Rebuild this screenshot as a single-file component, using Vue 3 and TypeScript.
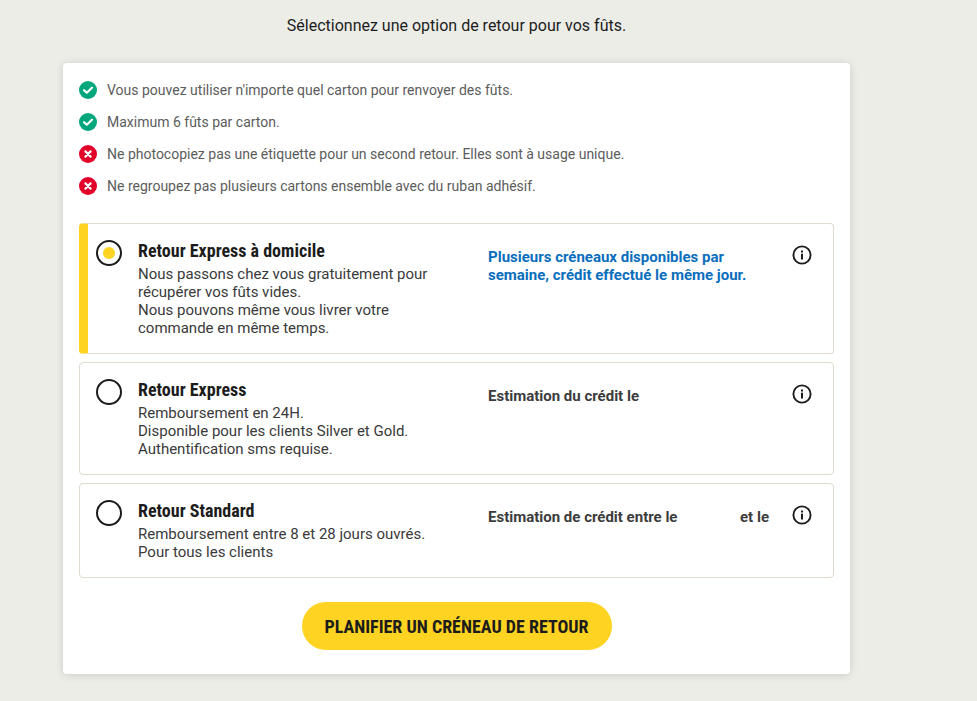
<script setup lang="ts">
interface Rule { ok: boolean; text: string }
interface Option { title: string; lines: string[]; selected: boolean; info: string; extra?: string }

const rules: Rule[] = [
  { ok: true, text: "Vous pouvez utiliser n'importe quel carton pour renvoyer des fûts." },
  { ok: true, text: 'Maximum 6 fûts par carton.' },
  { ok: false, text: 'Ne photocopiez pas une étiquette pour un second retour. Elles sont à usage unique.' },
  { ok: false, text: 'Ne regroupez pas plusieurs cartons ensemble avec du ruban adhésif.' },
]

const options: Option[] = [
  {
    title: 'Retour Express à domicile',
    lines: ['Nous passons chez vous gratuitement pour récupérer vos fûts vides.', 'Nous pouvons même vous livrer votre commande en même temps.'],
    selected: true,
    info: 'Plusieurs créneaux disponibles par semaine, crédit effectué le même jour.',
  },
  {
    title: 'Retour Express',
    lines: ['Remboursement en 24H.', 'Disponible pour les clients Silver et Gold.', 'Authentification sms requise.'],
    selected: false,
    info: 'Estimation du crédit le',
  },
  {
    title: 'Retour Standard',
    lines: ['Remboursement entre 8 et 28 jours ouvrés.', 'Pour tous les clients'],
    selected: false,
    info: 'Estimation de crédit entre le',
    extra: 'et le',
  },
]
</script>

<template>
  <main class="page">
    <h1 class="heading">Sélectionnez une option de retour pour vos fûts.</h1>
    <section class="card">
      <ul class="rules">
        <li v-for="r in rules" :key="r.text" class="rule">
          <svg class="rule-icon" viewBox="0 0 18 18" aria-hidden="true">
            <circle cx="9" cy="9" r="9" :fill="r.ok ? '#00a77d' : '#e2002b'" />
            <path v-if="r.ok" d="M5 9.2 L7.8 11.8 L13 6.7" fill="none" stroke="#fff" stroke-width="2.2" stroke-linecap="round" stroke-linejoin="round" />
            <path v-else d="M6.4 6.4 L11.6 11.6 M11.6 6.4 L6.4 11.6" fill="none" stroke="#fff" stroke-width="2.2" stroke-linecap="round" />
          </svg>
          <span>{{ r.text }}</span>
        </li>
      </ul>

      <div class="options">
        <article v-for="o in options" :key="o.title" class="option" :class="{ selected: o.selected }">
          <span class="radio"><span v-if="o.selected" class="dot"></span></span>
          <div class="desc">
            <h2 class="title">{{ o.title }}</h2>
            <p v-for="l in o.lines" :key="l" class="line">{{ l }}</p>
          </div>
          <div class="info" :class="{ blue: o.selected }">
            <span>{{ o.info }}</span>
            <span v-if="o.extra" class="extra">{{ o.extra }}</span>
          </div>
          <svg class="info-icon" viewBox="0 0 20 20" aria-hidden="true">
            <circle cx="10" cy="10" r="8.6" fill="none" stroke="#1c1c1c" stroke-width="1.9" />
            <rect x="9" y="8.7" width="2" height="5.8" fill="#1c1c1c" />
            <rect x="9" y="5.5" width="2" height="2" fill="#1c1c1c" />
          </svg>
        </article>
      </div>

      <div class="actions">
        <button class="cta" type="button">PLANIFIER UN CRÉNEAU DE RETOUR</button>
      </div>
    </section>
  </main>
</template>

<style scoped>
.page {
  width: 977px;
  height: 701px;
  background: #edede8;
  font-family: Roboto, "Liberation Sans", sans-serif;
  overflow: hidden;
  box-sizing: border-box;
}
.heading {
  margin: 0;
  height: 63px;
  padding: 16px 64px 0 0;
  box-sizing: border-box;
  text-align: center;
  font-size: 16px;
  font-weight: 400;
  line-height: 19px;
  color: #1c1c1c;
}
.card {
  width: 787px;
  height: 611px;
  margin-left: 63px;
  background: #fff;
  border-radius: 4px;
  box-shadow: 0 1px 8px rgba(0, 0, 0, 0.14);
  padding: 11px 16px 0;
  box-sizing: border-box;
}
.rules {
  list-style: none;
  margin: 0;
  padding: 0;
}
.rule {
  display: flex;
  align-items: center;
  gap: 10px;
  height: 32px;
  font-size: 14px;
  color: #5c5c5c;
}
.rule-icon {
  width: 18px;
  height: 18px;
  flex: none;
}
.options {
  margin-top: 21px;
  display: flex;
  flex-direction: column;
  gap: 8px;
}
.option {
  display: flex;
  align-items: flex-start;
  border: 1px solid #e0dbce;
  border-radius: 4px;
  padding: 16px 20px 16px 16px;
  overflow: hidden;
}
.option.selected {
  border-left: 9px solid #ffd321;
  padding-left: 8px;
}
.radio {
  flex: none;
  width: 26px;
  height: 26px;
  border: 2px solid #1c1c1c;
  border-radius: 50%;
  box-sizing: border-box;
  display: flex;
  align-items: center;
  justify-content: center;
}
.dot {
  width: 12px;
  height: 12px;
  border-radius: 50%;
  background: #ffd321;
}
.desc {
  width: 350px;
  margin-left: 16px;
  flex: none;
}
.title {
  margin: 0 0 3px;
  font-size: 18px;
  line-height: 22px;
  font-weight: 700;
  font-stretch: 75%;
  color: #1c1c1c;
}
.line {
  margin: 0;
  font-size: 15px;
  line-height: 18px;
  color: #3a3a3a;
  width: 305px;
}
.info {
  width: 304px;
  flex: none;
  display: flex;
  justify-content: space-between;
  font-size: 15px;
  font-weight: 700;
  line-height: 18px;
  color: #3c3c3c;
  padding: 8px 23px 0 0;
  box-sizing: border-box;
}
.info.blue {
  color: #0a6ebd;
}
.info-icon {
  width: 20px;
  height: 20px;
  flex: none;
  margin-top: 5px;
}
.actions {
  display: flex;
  justify-content: center;
  margin-top: 24px;
}
.cta {
  width: 310px;
  height: 48px;
  border: 0;
  border-radius: 24px;
  background: #ffd321;
  color: #1c1c1c;
  font-family: Roboto, "Liberation Sans", sans-serif;
  font-size: 18px;
  font-weight: 700;
  font-stretch: 75%;
  padding: 0;
}
</style>
